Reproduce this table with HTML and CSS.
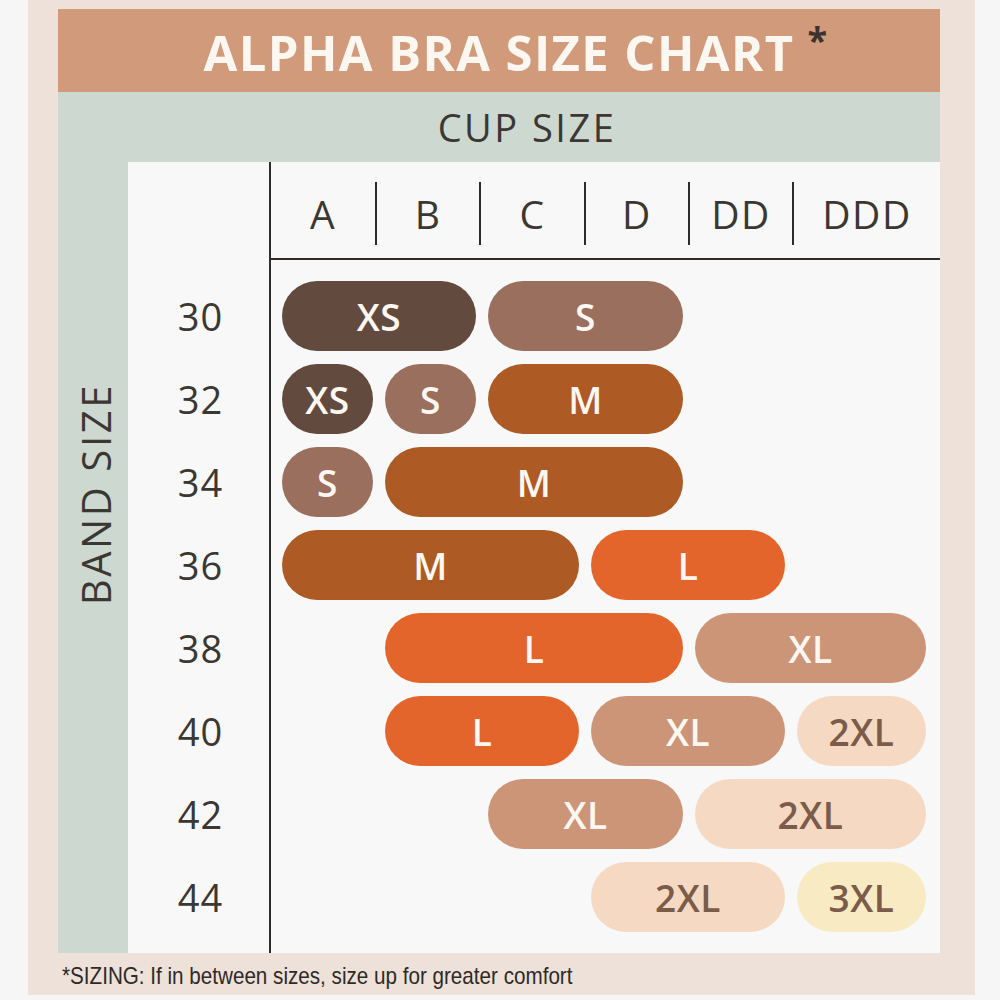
FILE: index.html
```html
<!DOCTYPE html>
<html>
<head>
<meta charset="utf-8">
<link rel="stylesheet" href="styles.css">
</head>
<body>
<div class="frame">
  <header class="title-bar"><h1>ALPHA BRA SIZE CHART<span class="ast">*</span></h1></header>
  <div class="cup-bar">CUP SIZE</div>
  <div class="body">
    <div class="band-col"><span class="band-label">BAND SIZE</span></div>
    <div class="chart">
      <div class="corner"></div>
      <div class="cups">
        <div class="cup">A</div>
        <div class="cup div">B</div>
        <div class="cup div">C</div>
        <div class="cup div">D</div>
        <div class="cup div">DD</div>
        <div class="cup div">DDD</div>
      </div>
      <div class="bands">
        <div class="band">30</div>
        <div class="band">32</div>
        <div class="band">34</div>
        <div class="band">36</div>
        <div class="band">38</div>
        <div class="band">40</div>
        <div class="band">42</div>
        <div class="band">44</div>
      </div>
      <div class="pills">
        <div class="pill xs r1 c1 s2">XS</div>
        <div class="pill s r1 c3 s2">S</div>

        <div class="pill xs r2 c1 s1">XS</div>
        <div class="pill s r2 c2 s1">S</div>
        <div class="pill m r2 c3 s2">M</div>

        <div class="pill s r3 c1 s1">S</div>
        <div class="pill m r3 c2 s3">M</div>

        <div class="pill m r4 c1 s3">M</div>
        <div class="pill l r4 c4 s2">L</div>

        <div class="pill l r5 c2 s3">L</div>
        <div class="pill xl r5 c5 s2">XL</div>

        <div class="pill l r6 c2 s2">L</div>
        <div class="pill xl r6 c4 s2">XL</div>
        <div class="pill xxl r6 c6 s1">2XL</div>

        <div class="pill xl r7 c3 s2">XL</div>
        <div class="pill xxl r7 c5 s2">2XL</div>

        <div class="pill xxl r8 c4 s2">2XL</div>
        <div class="pill xxxl r8 c6 s1">3XL</div>
      </div>
    </div>
  </div>
  <footer class="note"><span class="note-text">*SIZING: If in between sizes, size up for greater comfort</span></footer>
</div>
</body>
</html>
```

FILE: styles.css
```css
html, body {
  margin: 0;
  padding: 0;
  background: #f6f6f6;
}

.frame {
  margin-left: 28px;
  width: 947px;
  height: 995px;
  box-sizing: border-box;
  padding: 9px 35px 0 30px;
  background: #ede1d9;
  display: flex;
  flex-direction: column;
  font-family: "Open Sans", "Noto Sans", sans-serif;
  color: #3b3733;
}

.title-bar {
  height: 83px;
  background: #d09a7b;
  display: flex;
  align-items: center;
  justify-content: center;
}

.title-bar h1 {
  margin: 0;
  font-size: 49px;
  font-weight: 700;
  color: #fcf7f0;
  letter-spacing: 1.4px;
  position: relative;
  line-height: 1;
  padding-top: 4px;
}

.ast {
  position: absolute;
  right: -34px;
  top: -2px;
  font-size: 36px;
  color: #3b332e;
  font-weight: 700;
}

.cup-bar {
  height: 70px;
  background: #cdd8d0;
  display: flex;
  align-items: center;
  justify-content: center;
  padding-left: 56px;
  font-size: 38px;
  font-weight: 500;
  letter-spacing: 2.5px;
  color: #3b3733;
}

.body {
  height: 791px;
  display: flex;
}

.band-col {
  width: 70px;
  background: #cdd8d0;
  display: flex;
  align-items: center;
  justify-content: center;
  padding-bottom: 126px;
  box-sizing: border-box;
}

.band-label {
  writing-mode: vertical-rl;
  transform: rotate(180deg);
  font-size: 40px;
  font-weight: 500;
  letter-spacing: 2.6px;
  color: #3b3733;
  white-space: nowrap;
  margin-left: 4px;
}

.chart {
  flex: 1;
  background: #f8f8f8;
  display: grid;
  grid-template-columns: 141px 1fr;
  grid-template-rows: 98px 1fr;
}

.cups {
  border-left: 2px solid #2f2b28;
  border-bottom: 2px solid #2f2b28;
  display: grid;
  grid-template-columns: 104px 104px 105px 104px 104px 1fr;
  align-items: start;
  padding-top: 20px;
}

.cup {
  height: 63px;
  display: flex;
  align-items: center;
  justify-content: center;
  font-size: 39px;
  font-weight: 500;
  letter-spacing: 1.5px;
  color: #3b3733;
}

.cup.div {
  border-left: 2px solid #2f2b28;
}

.bands {
  display: grid;
  grid-auto-rows: 70px;
  row-gap: 13px;
  padding-top: 21px;
}

.band {
  display: flex;
  align-items: center;
  justify-content: center;
  font-size: 38px;
  font-weight: 500;
  letter-spacing: 1px;
  color: #3b3733;
  padding-left: 4px;
}

.pills {
  border-left: 2px solid #2f2b28;
  display: grid;
  grid-template-columns: 91px 91px 91px 92px 90px 129px;
  grid-auto-rows: 70px;
  column-gap: 12px;
  row-gap: 13px;
  padding: 21px 0 0 11px;
  align-content: start;
}

.pill {
  border-radius: 35px;
  display: flex;
  align-items: center;
  justify-content: center;
  font-size: 37px;
  font-weight: 600;
  letter-spacing: 0.5px;
  color: #fcf7f0;
}

.r1 { grid-row: 1; }
.r2 { grid-row: 2; }
.r3 { grid-row: 3; }
.r4 { grid-row: 4; }
.r5 { grid-row: 5; }
.r6 { grid-row: 6; }
.r7 { grid-row: 7; }
.r8 { grid-row: 8; }

.c1.s1 { grid-column: 1 / span 1; }
.c1.s2 { grid-column: 1 / span 2; }
.c1.s3 { grid-column: 1 / span 3; }
.c2.s1 { grid-column: 2 / span 1; }
.c2.s2 { grid-column: 2 / span 2; }
.c2.s3 { grid-column: 2 / span 3; }
.c3.s2 { grid-column: 3 / span 2; }
.c4.s2 { grid-column: 4 / span 2; }
.c5.s2 { grid-column: 5 / span 2; }
.c6.s1 { grid-column: 6 / span 1; }

.xs { background: #634a3e; }
.s { background: #9b6f5e; }
.m { background: #ad5a24; }
.l { background: #e4652c; }
.xl { background: #cc9578; }
.xxl { background: #f5d9c3; color: #7b5c4a; }
.xxxl { background: #f8ebc3; color: #7b5c4a; }

.note {
  flex: 1;
  display: flex;
  align-items: center;
  padding-left: 4px;
  padding-top: 4px;
  font-family: "Liberation Sans", "Noto Sans", sans-serif;
  color: #2e2a26;
}

.note-text {
  display: inline-block;
  font-size: 24px;
  transform: scaleX(0.86);
  transform-origin: left center;
  white-space: nowrap;
}
```
